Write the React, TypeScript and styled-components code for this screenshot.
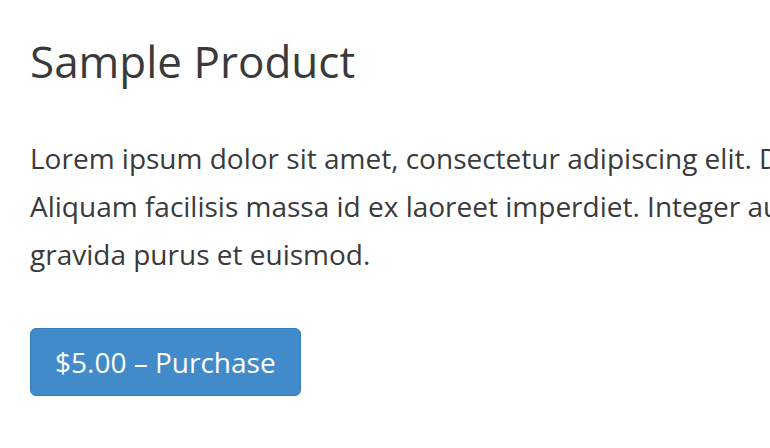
import styled, { createGlobalStyle } from "styled-components";

const GlobalStyle = createGlobalStyle`
  html, body {
    margin: 0;
    padding: 0;
    overflow: hidden;
    background: #fff;
  }
  body {
    font-family: "Open Sans", "Liberation Sans", sans-serif;
    color: #3a3a3a;
  }
`;

const Page = styled.main`
  padding: 37px 30px 0;
  width: 1100px;
`;

const Title = styled.h1`
  margin: 0;
  font-size: 44px;
  line-height: 48px;
  font-weight: 400;
`;

const Description = styled.p`
  margin: 49px 0 0;
  font-size: 28px;
  line-height: 48px;
`;

const BuyButton = styled.button`
  margin-top: 50px;
  height: 68px;
  padding: 0 24px;
  border: 1px solid #357ebd;
  border-radius: 6px;
  background: #428bca;
  color: #fff;
  font-family: inherit;
  font-size: 28px;
  cursor: pointer;
`;

function App() {
  return (
    <>
      <GlobalStyle />
      <Page>
        <Title>Sample Product</Title>
        <Description>
          Lorem ipsum dolor sit amet, consectetur adipiscing elit. Donec vel
          <br />
          Aliquam facilisis massa id ex laoreet imperdiet. Integer auctor
          <br />
          gravida purus et euismod.
        </Description>
        <BuyButton>$5.00 – Purchase</BuyButton>
      </Page>
    </>
  );
}

export default App;
